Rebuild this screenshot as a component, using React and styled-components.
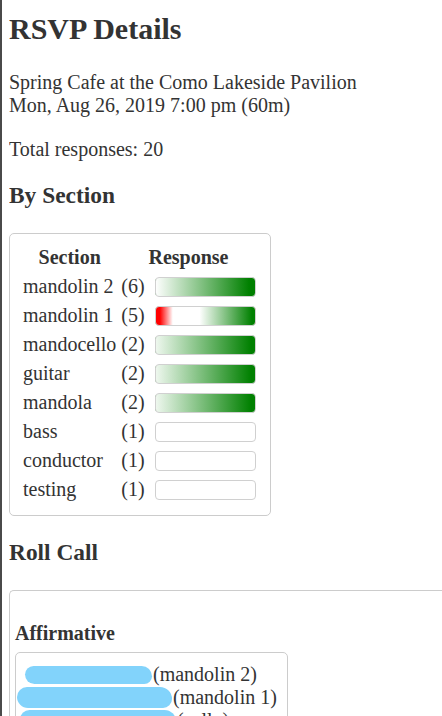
import React from 'react';
import styled, { createGlobalStyle } from 'styled-components';

const GlobalStyle = createGlobalStyle`
  html {
    overflow: hidden;
    border-left: 2px solid #4a4a4a;
    background: #fff;
  }

  body {
    margin: 0 0 0 7px;
    font-family: "Liberation Serif", "Times New Roman", serif;
    font-size: 20px;
    color: #333;
  }
`;

const Page = styled.main`
  display: block;
`;

const Title = styled.h2`
  margin: 12px 0 0;
  font-size: 30px;
  font-weight: bold;
`;

const Info = styled.p`
  margin: ${props => props.gap}px 0 0;
`;

const SubHeading = styled.h3`
  margin: ${props => props.gap}px 0 0;
  font-size: 23.4px;
  font-weight: bold;
`;

const Card = styled.div`
  width: fit-content;
  margin-top: 24px;
  padding: 10px 14px 11px 13px;
  border: 1px solid #ccc;
  border-radius: 5px;
`;

const SectionTable = styled.table`
  border-collapse: collapse;
  border-spacing: 0;

  th {
    height: 28px;
    padding: 0;
    font-weight: bold;
    text-align: center;
    vertical-align: middle;
  }

  td {
    height: 29px;
    padding: 0;
    vertical-align: middle;
    white-space: nowrap;
  }

  .name {
    padding-right: 5px;
  }

  td.name {
    text-align: left;
  }

  .bar {
    padding-left: 10px;
  }
`;

const Bar = styled.div`
  box-sizing: border-box;
  width: 101px;
  height: 20px;
  margin-top: 2px;
  border: 1px solid #d0d0d0;
  border-radius: 4px;
  background: ${props => props.fill};
`;

const RollCard = styled.div`
  margin-top: 24.4px;
  padding: 4px 5px;
  border: 1px solid #ccc;
  border-right: none;
  border-radius: 5px 0 0 5px;
`;

const GroupTitle = styled.h4`
  margin: 26.6px 0 7px;
  font-size: 20px;
  font-weight: bold;
`;

const NameList = styled.div`
  width: fit-content;
  padding: 10px 10px 10px 8px;
  border: 1px solid #ccc;
  border-radius: 5px;
`;

const NameRow = styled.div`
  white-space: nowrap;
`;

const Redacted = styled.span`
  display: inline-block;
  width: ${props => props.w}px;
  height: ${props => props.h}px;
  margin-left: ${props => props.offset}px;
  margin-right: 1px;
  vertical-align: ${props => props.drop}px;
  background: #82d3fb;
  border-radius: 10px 12px 9px 11px;
`;

const sections = [
  { name: 'mandolin 2', count: 6, fill: 'linear-gradient(to right, #fdfefd 0%, #008000 94%)' },
  { name: 'mandolin 1', count: 5, fill: 'linear-gradient(to right, #f00 4%, #fff 17%, #fff 44%, #008000 97%)' },
  { name: 'mandocello', count: 2, fill: 'linear-gradient(to right, #eef7ee 0%, #008000 96%)' },
  { name: 'guitar', count: 2, fill: 'linear-gradient(to right, #eef7ee 0%, #008000 96%)' },
  { name: 'mandola', count: 2, fill: 'linear-gradient(to right, #eef7ee 0%, #008000 96%)' },
  { name: 'bass', count: 1, fill: '#fff' },
  { name: 'conductor', count: 1, fill: '#fff' },
  { name: 'testing', count: 1, fill: '#fff' },
];

const affirmative = [
  { section: 'mandolin 2', w: 127, h: 18, offset: 1, drop: -3 },
  { section: 'mandolin 1', w: 155, h: 21, offset: -7, drop: -4 },
  { section: 'cello', w: 156, h: 20, offset: -4, drop: -3 },
  { section: 'guitar', w: 132, h: 19, offset: -2, drop: -3 },
  { section: 'mandola', w: 140, h: 19, offset: 0, drop: -3 },
];

const App = () => (
  <Page>
    <GlobalStyle />
    <Title>RSVP Details</Title>
    <Info gap={24.5}>
      Spring Cafe at the Como Lakeside Pavilion
      <br />
      Mon, Aug 26, 2019 7:00 pm (60m)
    </Info>
    <Info gap={21}>Total responses: 20</Info>

    <SubHeading gap={21}>By Section</SubHeading>
    <Card>
      <SectionTable>
        <thead>
          <tr>
            <th className="name">Section</th>
            <th colSpan={2}>Response</th>
          </tr>
        </thead>
        <tbody>
          {sections.map(s => (
            <tr key={s.name}>
              <td className="name">{s.name}</td>
              <td>({s.count})</td>
              <td className="bar">
                <Bar fill={s.fill} />
              </td>
            </tr>
          ))}
        </tbody>
      </SectionTable>
    </Card>

    <SubHeading gap={23.4}>Roll Call</SubHeading>
    <RollCard>
      <GroupTitle>Affirmative</GroupTitle>
      <NameList>
        {affirmative.map((p, i) => (
          <NameRow key={i}>
            <Redacted w={p.w} h={p.h} offset={p.offset} drop={p.drop} />
            ({p.section})
          </NameRow>
        ))}
      </NameList>
    </RollCard>
  </Page>
);

export default App;
